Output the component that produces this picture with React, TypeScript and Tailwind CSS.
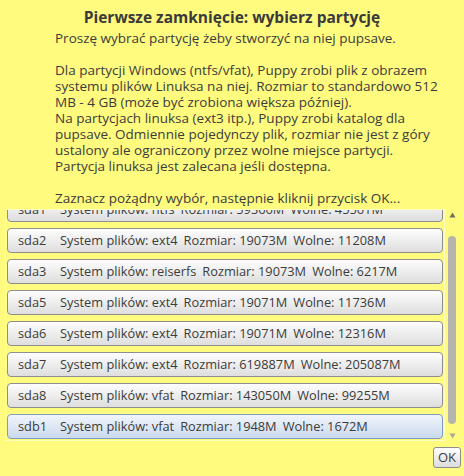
import React from 'react';

interface Partition {
  name: string;
  fs: string;
  size: string;
  free: string;
}

const partitions: Partition[] = [
  { name: 'sda1', fs: 'ntfs', size: '59366M', free: '45561M' },
  { name: 'sda2', fs: 'ext4', size: '19073M', free: '11208M' },
  { name: 'sda3', fs: 'reiserfs', size: '19073M', free: '6217M' },
  { name: 'sda5', fs: 'ext4', size: '19071M', free: '11736M' },
  { name: 'sda6', fs: 'ext4', size: '19071M', free: '12316M' },
  { name: 'sda7', fs: 'ext4', size: '619887M', free: '205087M' },
  { name: 'sda8', fs: 'vfat', size: '143050M', free: '99255M' },
  { name: 'sdb1', fs: 'vfat', size: '1948M', free: '1672M' },
];

const intro = `Proszę wybrać partycję żeby stworzyć na niej pupsave.

Dla partycji Windows (ntfs/vfat), Puppy zrobi plik z obrazem
systemu plików Linuksa na niej. Rozmiar to standardowo 512
MB - 4 GB (może być zrobiona większa później).
Na partycjach linuksa (ext3 itp.), Puppy zrobi katalog dla
pupsave. Odmiennie pojedynczy plik, rozmiar nie jest z góry
ustalony ale ograniczony przez wolne miejsce partycji.
Partycja linuksa jest zalecana jeśli dostępna.

Zaznacz pożądny wybór, następnie kliknij przycisk OK...`;

const App: React.FC = () => {
  const selected = 'sdb1';

  return (
    <div className="w-[464px] h-[476px] bg-[#fffb7f] flex flex-col font-['Open_Sans',sans-serif] text-[#3c3c3c] overflow-hidden">
      <h1 className="text-center font-bold text-[15.5px] leading-[20px] pt-[7px] text-[#3a3a3a]">
        Pierwsze zamknięcie: wybierz partycję
      </h1>

      <p className="pl-[55px] mt-[3px] text-[13.5px] leading-[16px] whitespace-pre-line h-[176px]">
        {intro}
      </p>

      {/* lista partycji */}
      <div className="flex mt-[3px] ml-[5px] h-[232px]">
        <div className="w-[440px] border border-[#fffdc0] overflow-hidden">
          <div className="flex flex-col gap-[6px] px-[1px] -mt-[13px]">
            {partitions.map((p) => (
              <button
                key={p.name}
                className={
                  p.name === selected
                    ? 'h-[25px] flex items-center pl-[10px] text-[12.8px] text-left rounded-[4px] border border-[#7f9dc2] bg-gradient-to-b from-[#f1f5fb] to-[#cbdaee] whitespace-pre'
                    : 'h-[25px] flex items-center pl-[10px] text-[12.8px] text-left rounded-[4px] border border-[#8e8e8e] bg-gradient-to-b from-[#fdfdfd] to-[#dedede] whitespace-pre'
                }
              >
                <span className="w-[42px]">{p.name}</span>
                <span>{`System plików: ${p.fs}`}</span>
                <span className="ml-[6px]">{`Rozmiar: ${p.size}`}</span>
                <span className="ml-[6px]">{`Wolne: ${p.free}`}</span>
              </button>
            ))}
          </div>
        </div>

        {/* pasek przewijania */}
        <div className="w-[14px] flex flex-col items-center pt-[2px]">
          <svg width="7" height="6" viewBox="0 0 7 6" className="mt-[1px]">
            <path d="M3.5 0.5 L6.5 5.5 L0.5 5.5 Z" fill="#6e6e62" />
          </svg>
          <div className="w-[8px] h-[188px] mt-[18px] rounded-[4px] bg-[#b5b5ad]" />
          <svg width="7" height="6" viewBox="0 0 7 6" className="mt-[9px]">
            <path d="M0.5 0.5 L6.5 0.5 L3.5 5.5 Z" fill="#a8a89a" />
          </svg>
        </div>
      </div>

      <div className="flex justify-end pr-[3px] mt-[6px]">
        <button className="w-[28px] h-[21px] flex items-center justify-center text-[13px] rounded-[3px] border border-[#8e8e8e] bg-gradient-to-b from-[#ffffff] to-[#dcdcdc]">
          OK
        </button>
      </div>
    </div>
  );
};

export default App;
